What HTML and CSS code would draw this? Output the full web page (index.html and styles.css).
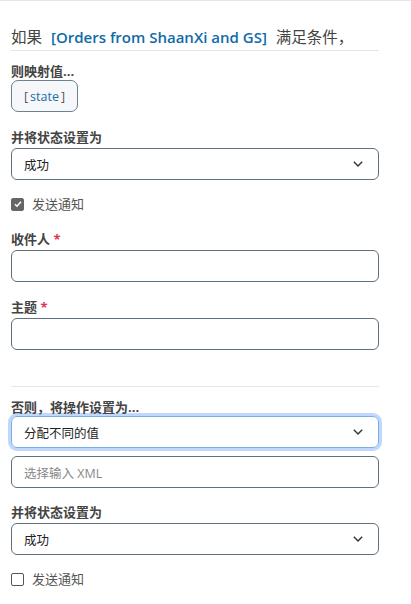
FILE: index.html
```html
<!DOCTYPE html>
<html lang="zh-CN">
<head>
  <meta charset="UTF-8">
  <title>条件映射</title>
  <link rel="stylesheet" href="styles.css">
</head>
<body>
  <div class="panel">
    <h3 class="rule-title">如果 <span class="rule-name">[Orders from ShaanXi and GS]</span> 满足条件，</h3>

    <div class="field first">
      <label class="field-label">则映射值...</label>
      <button class="token-btn"><span class="br">[</span>state<span class="br">]</span></button>
    </div>

    <div class="field">
      <label class="field-label">并将状态设置为</label>
      <div class="select">
        <span>成功</span>
        <svg class="chev" width="10" height="6" viewBox="0 0 10 6"><path d="M0.8 0.8l4.2 4.2 4.2-4.2" fill="none" stroke="#333" stroke-width="1.4"/></svg>
      </div>
    </div>

    <label class="check">
      <span class="box checked"><svg width="10" height="10" viewBox="0 0 10 10"><path d="M2 5.2l2 2 4-4.4" fill="none" stroke="#fff" stroke-width="1.6"/></svg></span>
      发送通知
    </label>

    <div class="field">
      <label class="field-label">收件人 <span class="req">*</span></label>
      <div class="input"></div>
    </div>

    <div class="field">
      <label class="field-label">主题 <span class="req">*</span></label>
      <div class="input"></div>
    </div>

    <hr class="sep">

    <div class="field first">
      <label class="field-label">否则，将操作设置为...</label>
      <div class="select focus">
        <span>分配不同的值</span>
        <svg class="chev" width="10" height="6" viewBox="0 0 10 6"><path d="M0.8 0.8l4.2 4.2 4.2-4.2" fill="none" stroke="#333" stroke-width="1.4"/></svg>
      </div>
      <div class="input placeholder">选择输入 XML</div>
    </div>

    <div class="field tight">
      <label class="field-label">并将状态设置为</label>
      <div class="select">
        <span>成功</span>
        <svg class="chev" width="10" height="6" viewBox="0 0 10 6"><path d="M0.8 0.8l4.2 4.2 4.2-4.2" fill="none" stroke="#333" stroke-width="1.4"/></svg>
      </div>
    </div>

    <label class="check">
      <span class="box"></span>
      发送通知
    </label>
  </div>
</body>
</html>
```

FILE: styles.css
```css
body {
  margin: 0;
  font-family: "Open Sans", "Noto Sans CJK SC", sans-serif;
  color: #333;
  background: #fff;
  border-top: 1px solid #e3e6ea;
}

.panel {
  width: 368px;
  padding: 0 11px;
}

.rule-title {
  margin: 24px 0 0;
  padding-bottom: 2px;
  font-size: 15.5px;
  font-weight: normal;
  color: #444;
  border-bottom: 1px solid #e1e4e8;
}

.rule-name {
  color: #0f6ba8;
  font-weight: 600;
  font-size: 15px;
  margin: 0 5px;
}

.field {
  margin-top: 16px;
}

.field.first {
  margin-top: 11px;
}

.field.tight {
  margin-top: 15px;
}

.check + .field {
  margin-top: 18px;
}

.field-label {
  display: block;
  font-size: 13px;
  font-weight: bold;
  color: #444;
  line-height: 18px;
  margin-bottom: 2px;
}

.field.first .field-label {
  margin-bottom: 0;
}

.req {
  color: #e0344b;
}

.token-btn {
  display: block;
  font-family: inherit;
  font-size: 12.5px;
  color: #1a6fa6;
  background: #f5f7fa;
  border: 1px solid #6f7f8e;
  border-radius: 7px;
  height: 32px;
  padding: 0 10px;
}

.token-btn .br {
  color: #555;
  margin: 0 2px;
}

.select, .input {
  box-sizing: border-box;
  height: 32px;
  border: 1px solid #5e6f7e;
  border-radius: 6px;
  display: flex;
  align-items: center;
  justify-content: space-between;
  padding: 0 15px 0 12px;
  font-size: 12.5px;
  color: #222;
}

.select.focus {
  border-color: #7aaef0;
  box-shadow: 0 0 0 3px #c0d8fb;
}

.input.placeholder {
  margin-top: 8px;
  color: #888;
}

.check {
  display: flex;
  align-items: center;
  gap: 8px;
  margin-top: 16px;
  font-size: 13px;
  line-height: 16px;
  color: #555;
}

.box {
  box-sizing: border-box;
  width: 13px;
  height: 13px;
  border: 1px solid #555;
  border-radius: 2px;
  display: flex;
  align-items: center;
  justify-content: center;
}

.box.checked {
  background: #666;
  border-color: #666;
}

.sep {
  border: 0;
  border-top: 1px solid #e5e7ea;
  margin: 36px 0 0;
}
```
